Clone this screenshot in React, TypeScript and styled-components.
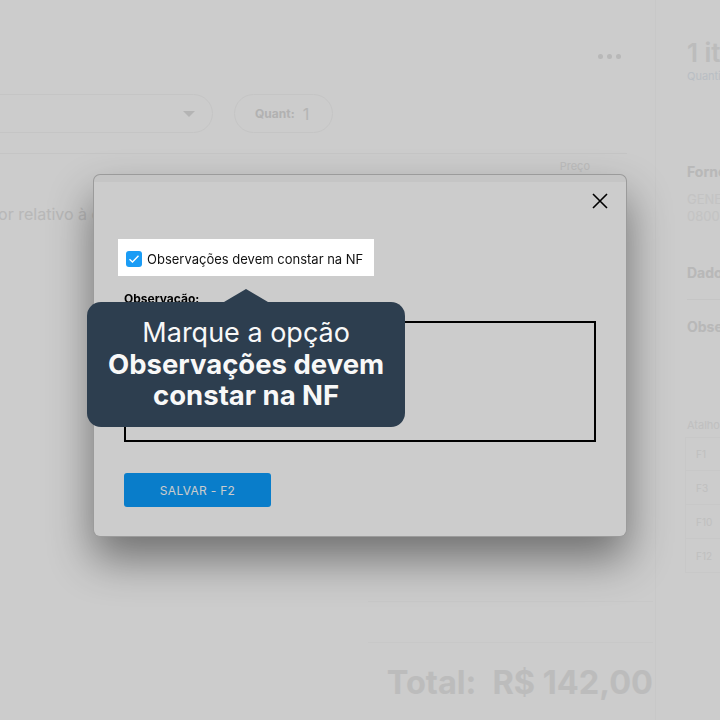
import React from "react";
import styled, { createGlobalStyle } from "styled-components";

const GlobalStyle = createGlobalStyle`
  html, body {
    margin: 0;
    padding: 0;
    background: #ffffff;
    overflow: hidden;
    font-family: Inter, "Noto Sans", Roboto, sans-serif;
  }
`;

/* ---------- page behind the modal ---------- */

const PageGrid = styled.div`
  display: grid;
  grid-template-columns: 695px 220px;
  margin-left: -40px;
  min-height: 720px;
`;

const MainColumn = styled.div`
  display: flex;
  flex-direction: column;
`;

const TopBar = styled.div`
  display: flex;
  justify-content: flex-end;
  align-items: center;
  height: 24px;
  margin-top: 44px;
  padding-right: 34px;
  gap: 4px;
`;

const Dot = styled.span`
  width: 5px;
  height: 5px;
  border-radius: 50%;
  background: #e6e6e6;
`;

const ControlsRow = styled.div`
  display: flex;
  align-items: center;
  gap: 21px;
  margin-top: 26px;
  padding-left: 20px;
`;

const SelectPill = styled.div`
  width: 233px;
  height: 39px;
  box-sizing: border-box;
  border: 1px solid #f7f7f7;
  border-radius: 20px;
  display: flex;
  align-items: center;
  justify-content: flex-end;
  padding-right: 17px;
`;

const Caret = styled.span`
  width: 0;
  height: 0;
  border-left: 6px solid transparent;
  border-right: 6px solid transparent;
  border-top: 6px solid #e2e2e2;
`;

const QuantPill = styled.div`
  width: 99px;
  height: 39px;
  box-sizing: border-box;
  border: 1px solid #f7f7f7;
  border-radius: 20px;
  display: flex;
  align-items: center;
  gap: 8px;
  padding-left: 20px;
  color: #dedede;
`;

const QuantLabel = styled.span`
  font-size: 12px;
  font-weight: 700;
`;

const QuantValue = styled.span`
  font-size: 16px;
  color: #e2e2e2;
`;

const Divider = styled.div`
  height: 1px;
  background: #f7f7f7;
  margin: 20px 28px 0 0;
`;

const TableHead = styled.div`
  display: flex;
  justify-content: flex-end;
  padding-right: 65px;
  margin-top: 5px;
  font-size: 11px;
  color: #ececec;
`;

const TableRow = styled.div`
  margin-top: 31px;
  padding-left: 15px;
  font-size: 16px;
  color: #e6e6e6;
`;

const Footer = styled.div`
  margin-top: auto;
  display: flex;
  flex-direction: column;
  align-items: flex-end;
  padding: 0 2px 18px 0;
`;

const SummaryBox = styled.div`
  width: 285px;
  height: 40px;
  border-top: 1px solid #fafafa;
  border-bottom: 1px solid #fafafa;
  margin-bottom: 21px;
`;

const TotalText = styled.div`
  font-size: 32.5px;
  line-height: 38px;
  font-weight: 700;
  color: #ececec;
  display: flex;
  gap: 16px;
`;

const Sidebar = styled.aside`
  border-left: 1px solid #fafafa;
  padding-left: 31px;
  display: flex;
  flex-direction: column;
`;

const ItemsTitle = styled.div`
  margin-top: 38px;
  font-size: 26px;
  line-height: 30px;
  font-weight: 600;
  color: #ebebeb;
  white-space: nowrap;
`;

const ItemsSub = styled.div`
  margin-top: 1px;
  font-size: 11px;
  line-height: 14px;
  color: #e8eef5;
  white-space: nowrap;
`;

const SideHeading = styled.div<{ $gap: number }>`
  margin-top: ${(p) => p.$gap}px;
  font-size: 14px;
  line-height: 18px;
  font-weight: 700;
  color: #e6e6e6;
  white-space: nowrap;
`;

const SideText = styled.div<{ $first?: boolean }>`
  margin-top: ${(p) => (p.$first ? 10 : 0)}px;
  font-size: 13px;
  line-height: 17px;
  color: #f4f4f4;
  white-space: nowrap;
`;

const SideDivider = styled.div`
  height: 1px;
  background: #f7f7f7;
  margin-top: 17px;
`;

const ShortcutTitle = styled.div`
  margin-top: 82px;
  font-size: 11px;
  line-height: 14px;
  color: #f0f0f0;
  white-space: nowrap;
`;

const ShortcutList = styled.div`
  margin-top: 5px;
  display: flex;
  flex-direction: column;
`;

const ShortcutRow = styled.div`
  height: 34px;
  box-sizing: border-box;
  border: 1px solid #fafafa;
  border-top: none;
  margin-left: -2px;
  display: flex;
  align-items: center;
  padding-left: 10px;
  font-size: 10px;
  color: #f0f0f0;
  &:first-child {
    border-top: 1px solid #fafafa;
  }
`;

/* ---------- modal ---------- */

const ModalLayer = styled.div`
  position: fixed;
  inset: 0;
  z-index: 10;
  display: flex;
  justify-content: center;
  align-items: center;
  padding-bottom: 8px;
  box-sizing: border-box;
`;

const Modal = styled.div`
  width: 534px;
  box-sizing: border-box;
  background: #ffffff;
  border: 1px solid #c2c2c2;
  border-top-width: 7px;
  border-top-color: #f7f7f7;
  border-radius: 7px;
  box-shadow: 0 22px 44px rgba(0, 0, 0, 0.45);
  position: relative;
  &::before {
    content: "";
    position: absolute;
    left: -1px;
    right: -1px;
    top: -8px;
    height: 8px;
    border: 1px solid #c2c2c2;
    border-bottom: none;
    border-radius: 7px 7px 0 0;
    box-sizing: border-box;
  }
`;

const ModalHeader = styled.div`
  display: flex;
  justify-content: flex-end;
  padding: 11px 18px 0 0;
`;

const CloseButton = styled.button`
  width: 16px;
  height: 16px;
  padding: 0;
  border: none;
  background: none;
  display: flex;
  cursor: pointer;
`;

const ModalBody = styled.div`
  padding: 30px 30px 29px 30px;
  display: flex;
  flex-direction: column;
  align-items: flex-start;
`;

const Spotlight = styled.label`
  position: relative;
  z-index: 1;
  margin-left: -6px;
  padding: 12px 11px 9px 8px;
  background: #ffffff;
  display: inline-flex;
  align-items: center;
  gap: 5px;
  font-size: 13px;
  line-height: 16px;
  color: #111111;
  box-shadow: 0 0 0 3000px rgba(0, 0, 0, 0.2);
`;

const CheckBox = styled.span`
  width: 16px;
  height: 16px;
  border-radius: 3px;
  background: #1a9cf5;
  display: flex;
  align-items: center;
  justify-content: center;
`;

const Tooltip = styled.div`
  position: absolute;
  top: calc(100% + 26px);
  left: 50%;
  transform: translateX(-50%);
  width: 318px;
  box-sizing: border-box;
  padding: 15px 0;
  border-radius: 14px;
  background: #2d3e4f;
  color: #f8f8f8;
  text-align: center;
  font-size: 27px;
  line-height: 31.5px;
  &::before {
    content: "";
    position: absolute;
    top: -13px;
    left: 50%;
    transform: translateX(-50%);
    border-left: 22px solid transparent;
    border-right: 22px solid transparent;
    border-bottom: 13px solid #2d3e4f;
  }
`;

const TooltipStrong = styled.strong`
  display: block;
  font-weight: 700;
  font-size: 27.5px;
`;

const FieldLabel = styled.div`
  margin-top: 15px;
  font-size: 12px;
  line-height: 15px;
  font-weight: 700;
  color: #000000;
`;

const NoteArea = styled.textarea`
  margin-top: 15px;
  width: 472px;
  height: 121px;
  box-sizing: border-box;
  border: 2px solid #000000;
  resize: none;
  outline: none;
  font-family: inherit;
  background: #ffffff;
`;

const SaveButton = styled.button`
  margin-top: 31px;
  width: 147px;
  height: 34px;
  border: none;
  border-radius: 3px;
  background: #0c9dfd;
  color: #ffffff;
  font-family: inherit;
  font-size: 12px;
  letter-spacing: 0.3px;
  cursor: pointer;
`;

const shortcuts = ["F1", "F3", "F10", "F12"];

const App = () => {
  return (
    <>
      <GlobalStyle />
      <PageGrid>
        <MainColumn>
          <TopBar>
            <Dot />
            <Dot />
            <Dot />
          </TopBar>
          <ControlsRow>
            <SelectPill>
              <Caret />
            </SelectPill>
            <QuantPill>
              <QuantLabel>Quant:</QuantLabel>
              <QuantValue>1</QuantValue>
            </QuantPill>
          </ControlsRow>
          <Divider />
          <TableHead>Preço</TableHead>
          <TableRow>Valor relativo à compra</TableRow>
          <Footer>
            <SummaryBox />
            <TotalText>
              <span>Total:</span>
              <span>R$ 142,00</span>
            </TotalText>
          </Footer>
        </MainColumn>
        <Sidebar>
          <ItemsTitle>1 item</ItemsTitle>
          <ItemsSub>Quantidade total: 1</ItemsSub>
          <SideHeading $gap={80}>Fornecedor</SideHeading>
          <SideText $first>GENERICO</SideText>
          <SideText>0800 000 0000</SideText>
          <SideHeading $gap={39}>Dados adicionais</SideHeading>
          <SideDivider />
          <SideHeading $gap={18}>Observações</SideHeading>
          <ShortcutTitle>Atalhos</ShortcutTitle>
          <ShortcutList>
            {shortcuts.map((key) => (
              <ShortcutRow key={key}>{key}</ShortcutRow>
            ))}
          </ShortcutList>
        </Sidebar>
      </PageGrid>

      <ModalLayer>
        <Modal>
          <ModalHeader>
            <CloseButton aria-label="Fechar">
              <svg width="16" height="16" viewBox="0 0 16 16">
                <path d="M1 1 L15 15 M15 1 L1 15" stroke="#000" strokeWidth="1.6" fill="none" />
              </svg>
            </CloseButton>
          </ModalHeader>
          <ModalBody>
            <Spotlight>
              <CheckBox>
                <svg width="12" height="10" viewBox="0 0 12 10">
                  <path d="M1.5 5.2 L4.5 8 L10.5 1.8" stroke="#fff" strokeWidth="1.4" fill="none" />
                </svg>
              </CheckBox>
              Observações devem constar na NF
              <Tooltip>
                Marque a opção
                <TooltipStrong>Observações devem constar na NF</TooltipStrong>
              </Tooltip>
            </Spotlight>
            <FieldLabel>Observação:</FieldLabel>
            <NoteArea />
            <SaveButton>SALVAR - F2</SaveButton>
          </ModalBody>
        </Modal>
      </ModalLayer>
    </>
  );
};

export default App;
